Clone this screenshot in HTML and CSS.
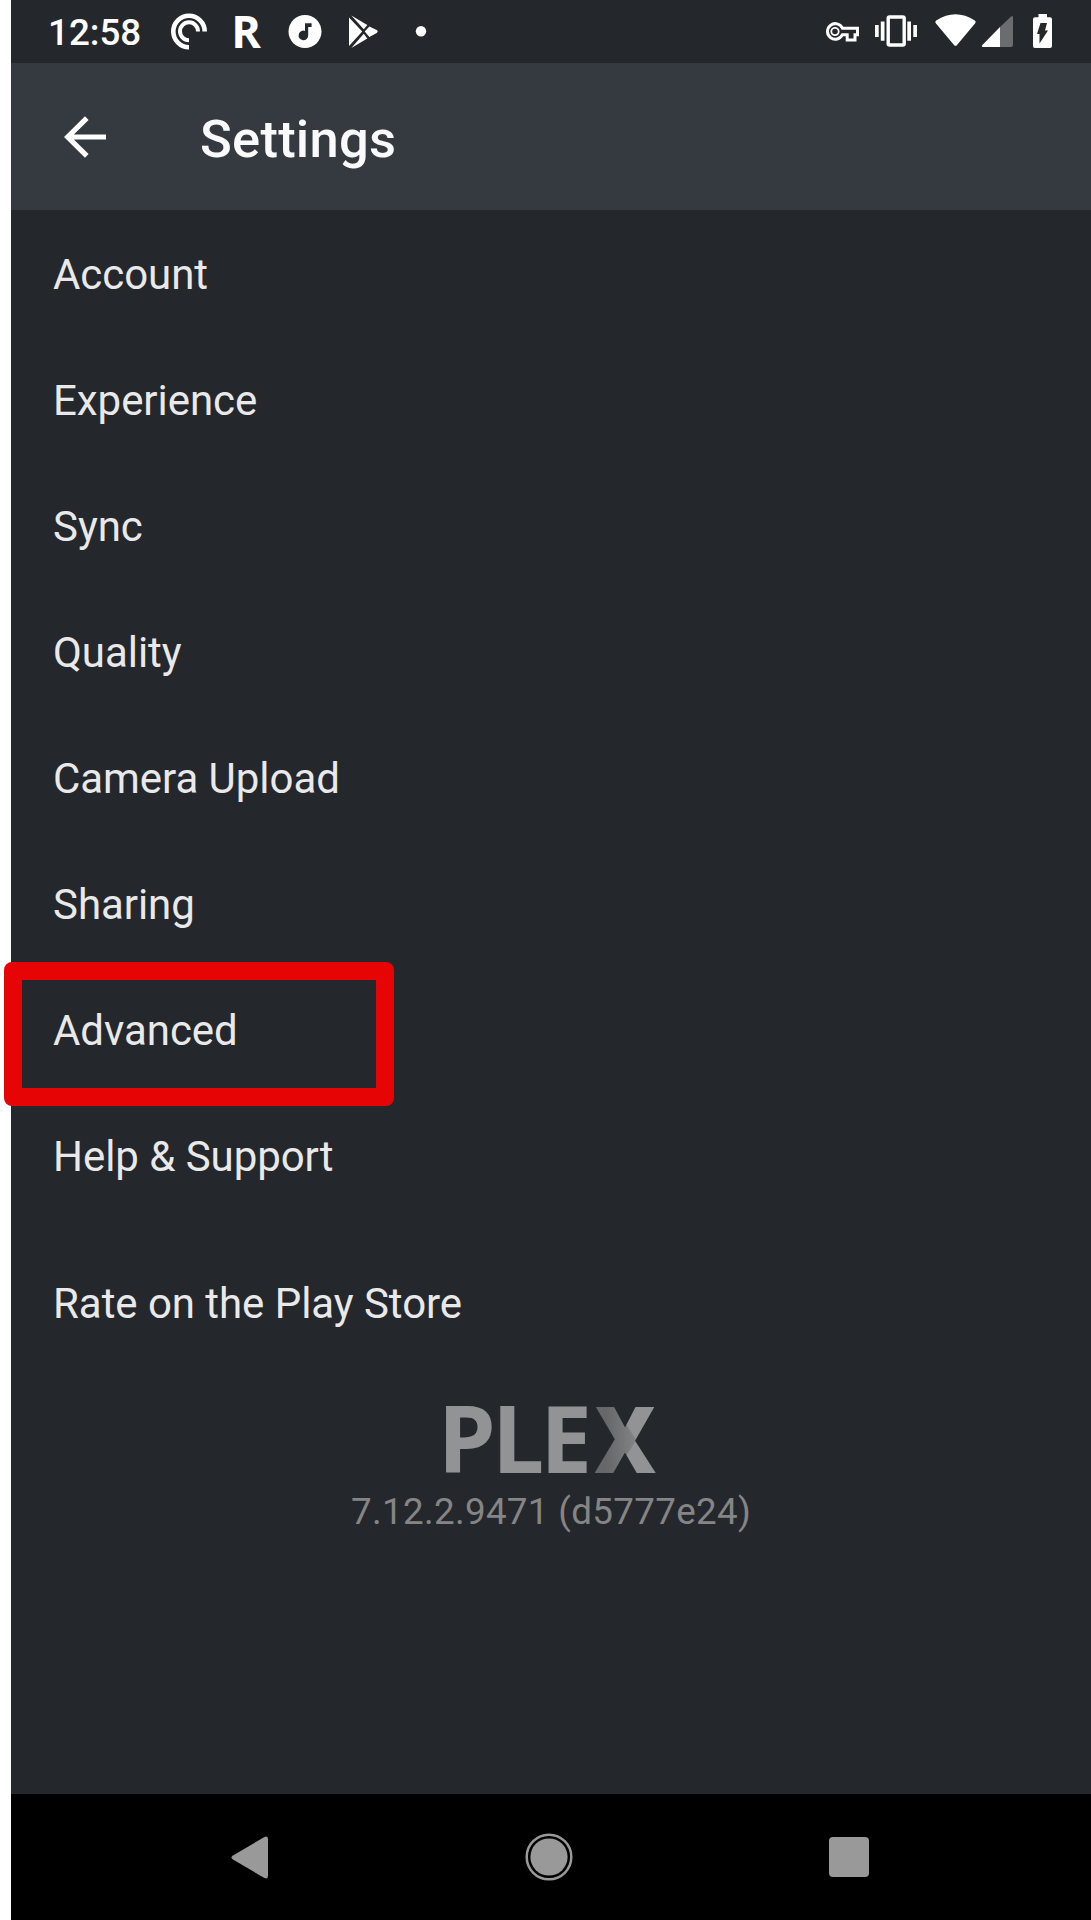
FILE: index.html
```html
<!DOCTYPE html>
<html lang="en">
<head>
<meta charset="utf-8">
<title>Settings</title>
<link rel="stylesheet" href="styles.css">
</head>
<body>
<div class="phone">
  <header class="status">
    <span class="clock">12:58</span>
    <div class="notifications">
      <svg width="58" height="63" viewBox="160 0 58 63" fill="none" stroke="#fff"><path d="M189 47.2A15.7 15.7 0 1 1 204.7 31.5" stroke-width="4.6"/><path d="M189 40.3A9 9 0 1 1 198 31.5" stroke-width="4"/></svg>
      <span class="reader">R</span>
      <svg width="58" height="63" viewBox="276 0 58 63"><circle cx="305" cy="31.5" r="16.5" fill="#fff"/><path d="M305 23.2h6.6v3.8h-3.4v8.3a4.8 4.8 0 1 1-3.2-4.4z" fill="#24272c"/></svg>
      <svg width="58" height="63" viewBox="334 0 58 63"><path d="M349 17.5l13.2 14L349 46zM351.3 15.5l16 9.500-3.500 4.300zM351.300 48l16-9.500-3.500-4.800zM364.700 31.500l4.700-4.900 7.300 3.500q2 1.400 0 2.800l-7.300 4z" fill="#fff"/></svg>
      <svg width="58" height="63" viewBox="392 0 58 63"><circle cx="421" cy="31.2" r="5.2" fill="#fff"/></svg>
    </div>
    <div class="system">
      <svg width="38" height="63" viewBox="824 0 38 63" fill="none" stroke="#fff" stroke-width="3"><path d="M842.4 28.2h15.1v6.5h-2.5v5.4h-7.8v-5.4h-4.8a7.8 7.8 0 1 1 0-6.5z"/><circle cx="835" cy="31.5" r="3.7" stroke-width="1.8"/></svg>
      <svg class="gap-vibrate" width="46" height="63" viewBox="873 0 46 63"><path d="M875 25h3.7v12H875zM880.8 21.5h3.7v19.2h-3.7zM907.3 21.5h3.7v19.2h-3.7zM913.3 25h3.7v12h-3.7z" fill="#fff"/><rect x="888.2" y="17" width="16" height="28" rx="1.5" fill="none" stroke="#fff" stroke-width="3.4"/></svg>
      <svg class="gap-wifi" width="45" height="63" viewBox="933 0 45 63"><path d="M935.8 23.2Q934.5 21.7 936.2 20.4Q955.5 8 974.8 20.4Q976.5 21.7 975.2 23.2L957 45Q955.5 46.7 954 45z" fill="#fff"/></svg>
      <svg class="gap-signal" width="35" height="63" viewBox="980 0 35 63"><path d="M1000 27v20h11q2 0 2-2V17.5q0-2.500-2-1z" fill="#6a6c6f"/><path d="M1000 27v20h-17q-2-.3-.6-2z" fill="#fff"/></svg>
      <svg class="gap-battery" width="23" height="63" viewBox="1031 0 23 63"><path d="M1038.5 14h8.5v3.3h3q2 0 2 2V46q0 2-2 2h-15q-2 0-2-2V19.3q0-2 2-2h3.5z" fill="#fff"/><path d="M1040.5 23h6.5l-2 7.5h3L1039.5 43.5v-9.5h-2.5z" fill="#24272c"/></svg>
    </div>
  </header>
  <div class="appbar">
    <svg class="back" width="42" height="42" viewBox="0 0 42 42"><path d="M22.8 2.1L3.700 21l19.100 18.900M4 21h38" fill="none" stroke="#fff" stroke-width="5.2"/></svg>
    <h1 class="title">Settings</h1>
  </div>
  <main class="content">
    <ul class="menu">
      <li class="item">Account</li>
      <li class="item">Experience</li>
      <li class="item">Sync</li>
      <li class="item">Quality</li>
      <li class="item">Camera Upload</li>
      <li class="item">Sharing</li>
      <li class="item marked">Advanced</li>
      <li class="item">Help &amp; Support</li>
      <li class="item rate">Rate on the Play Store</li>
    </ul>
    <svg class="logo" width="242" height="132" viewBox="430 1370 242 132">
      <defs>
        <linearGradient id="fold" x1="0" x2="1" y1="0" y2="0"><stop offset=".35" stop-color="#666769"/><stop offset="1" stop-color="#838486"/></linearGradient>
        <pattern id="cross" patternUnits="userSpaceOnUse" x="590" y="1400" width="80" height="80"><rect width="80" height="80" fill="#929395"/><path d="M0 0H21L46.2 40L21 80H0z" fill="url(#fold)"/></pattern>
      </defs>
      <g class="logo-text"><text x="437.8" y="1473">P</text><text x="492" y="1473">L</text><text x="540.2" y="1473">E</text><text class="logo-x" x="594.5" y="1473" textLength="61.5" lengthAdjust="spacingAndGlyphs" fill="url(#cross)">X</text></g>
    </svg>
    <p class="version">7.12.2.9471 (d5777e24)</p>
  </main>
  <nav class="nav">
    <svg width="38" height="43" viewBox="0 0 38 43"><path d="M2 19.5L33 1.2q4-2 4 2v36.6q0 4-4 2L2 23.5q-3-2 0-4z" fill="#999"/></svg>
    <svg width="48" height="48" viewBox="0 0 48 48"><circle cx="24" cy="24" r="22.3" fill="none" stroke="#999" stroke-width="2.5"/><circle cx="24" cy="24" r="18.6" fill="#999"/></svg>
    <svg width="40" height="40" viewBox="0 0 40 40"><rect width="40" height="40" rx="4" fill="#999"/></svg>
  </nav>
</div>
</body>
</html>
```
FILE: styles.css
```css
body {
  margin: 0;
  background: #fff;
  font-family: Roboto, "Liberation Sans", sans-serif;
}
svg { display: block; flex: none; }
.phone {
  display: flex;
  flex-direction: column;
  width: 1080px;
  height: 1920px;
  margin-left: 11px;
  background: #24272c;
}
.status {
  display: flex;
  align-items: center;
  height: 63px;
  padding: 0 37px;
  color: #fff;
}
.clock {
  width: 112px;
  padding-top: 2px;
  font-size: 36.75px;
  font-weight: 500;
  line-height: 63px;
}
.notifications, .system { display: flex; }
.system { margin-left: auto; }
.reader {
  box-sizing: border-box;
  width: 58px;
  padding-right: 2px;
  text-align: center;
  font: 700 45px/61px "Open Sans", sans-serif;
}
.gap-vibrate { margin-left: 11px; }
.gap-wifi { margin-left: 14px; }
.gap-signal { margin-left: 2px; }
.gap-battery { margin-left: 16px; }
.appbar {
  display: flex;
  align-items: center;
  gap: 94px;
  height: 147px;
  padding-left: 53px;
  background: #353940;
}
.title {
  margin: 0;
  padding-top: 4px;
  color: #fafafa;
  font-size: 52.5px;
  font-weight: 500;
  letter-spacing: 0.25px;
  line-height: 62px;
}
.content { flex: 1; }
.menu {
  margin: 0;
  padding: 0;
  list-style: none;
}
.item {
  position: relative;
  height: 126px;
  padding-left: 42px;
  color: #e9e9ea;
  font-size: 42px;
  letter-spacing: -0.05px;
  line-height: 129px;
}
.rate { margin-top: 21px; }
.marked::after {
  content: "";
  position: absolute;
  left: -7px;
  top: -4px;
  width: 354px;
  height: 108px;
  border: 18px solid #e60404;
  border-radius: 8px;
}
.logo { margin: 5px auto 0; }
.logo-text {
  fill: #929395;
  font: 700 92.5px "Open Sans", sans-serif;
}
.logo-x { font-weight: 800; }
.version {
  margin: -12px 0 0;
  color: #858585;
  font-size: 36.75px;
  letter-spacing: 0.33px;
  line-height: 44px;
  text-align: center;
}
.nav {
  display: flex;
  align-items: center;
  justify-content: space-between;
  height: 126px;
  padding: 0 222px 0 220px;
  background: #000;
}
```
